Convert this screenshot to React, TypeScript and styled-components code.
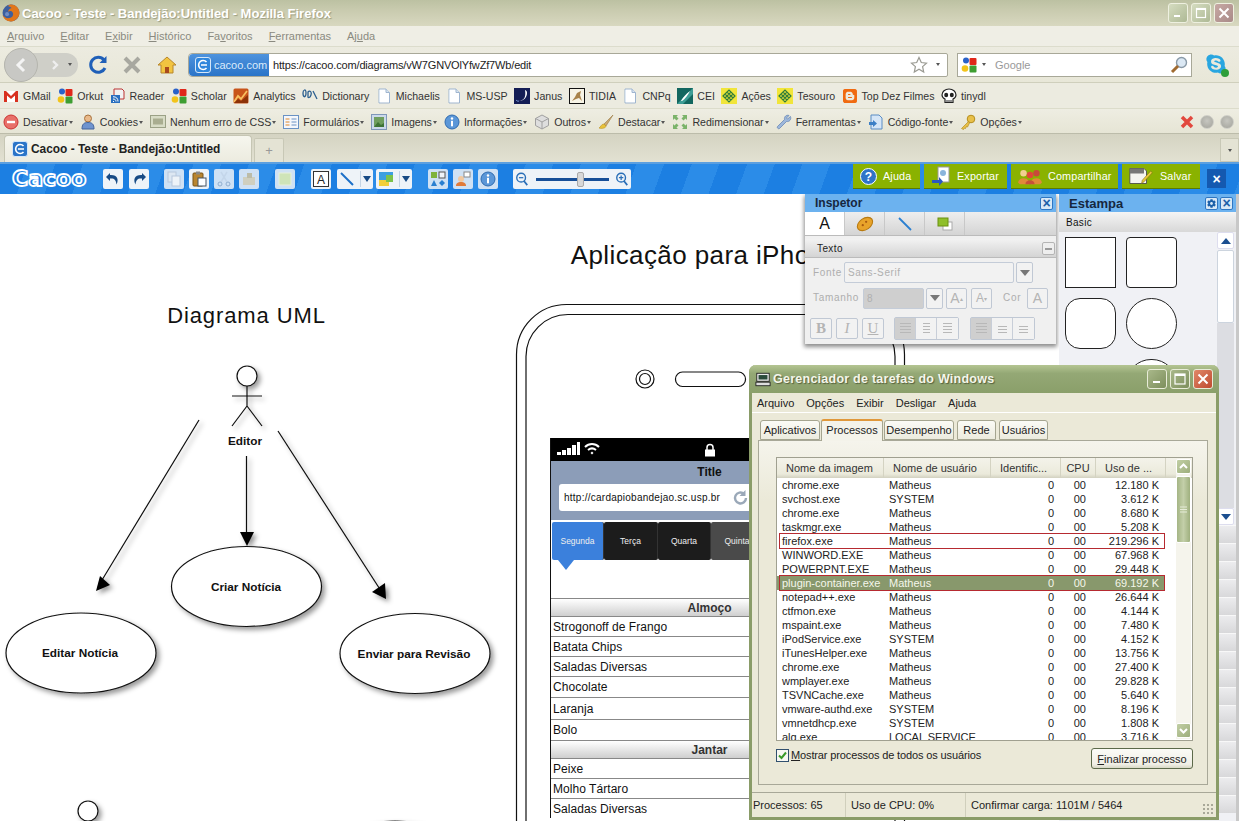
import styled, { createGlobalStyle } from 'styled-components';
import { FaBlogger, FaCog, FaSkype } from 'react-icons/fa';
import { ReactNode } from 'react';

const GlobalStyle = createGlobalStyle`
  html, body { margin: 0; padding: 0; overflow: hidden; background: #fff; }
  * { box-sizing: border-box; }
`;

const Ico = styled.svg.attrs({ viewBox: '0 0 16 16' })<{ $s?: number }>`
  width: ${(p) => p.$s ?? 16}px;
  height: ${(p) => p.$s ?? 16}px;
  flex: none;
  display: block;
`;

/* ---------- bookmark icons ---------- */
const GmailIcon = () => (
  <Ico>
    <path d="M1 3h14v11H1z" fill="#fff" />
    <path d="M1 14V3h2l5 5 5-5h2v11h-3V7.5L8 11 4 7.5V14z" fill="#d8301f" />
  </Ico>
);
const GoogleIcon = () => (
  <Ico>
    <circle cx="5" cy="3.6" r="3" fill="#2a62c8" />
    <rect x="8.5" y="1" width="7" height="7" rx="1" fill="#e0271a" />
    <circle cx="4" cy="11.5" r="3.3" fill="#f3c41a" />
    <rect x="8.5" y="8.5" width="7" height="7" rx="1" fill="#3e9e32" />
  </Ico>
);
const ReaderIcon = () => (
  <Ico>
    <path d="M4 1h8l2 2v8H4z" fill="#f2f2f2" stroke="#b33" />
    <rect x="1" y="7" width="9" height="8" fill="#2a6fc0" />
    <path d="M3 13.5h1M3 11c2 0 3 1 3 2.5M3 8.7c3.500 0 5 2 5 4.800" stroke="#fff" fill="none" />
  </Ico>
);
const AnalyticsIcon = () => (
  <Ico>
    <rect x="0.500" y="0.500" width="15" height="15" rx="1.500" fill="#c8541a" />
    <path d="M1 14l4-6 3 3 6-8" stroke="#f8c060" strokeWidth="1.800" fill="none" />
    <path d="M1 15l4-4 3 2 7-6v8z" fill="#8c3208" />
  </Ico>
);
const DictionaryIcon = () => (
  <Ico>
    <path d="M1 5c0 5 3 5 3 0s-3-3-3 0M6 9V4c2-2 4 0 3 3s-3 3-3 2M11 3l4 8" stroke="#2c5f8f" strokeWidth="1.300" fill="none" />
  </Ico>
);
const PageIcon = () => (
  <Ico>
    <path d="M3 1h7l3.500 3.500V15H3z" fill="#fff" stroke="#9fb5cf" />
    <path d="M10 1v3.500h3.500" fill="#dbe6f2" stroke="#9fb5cf" />
    <path d="M3.500 14V2" stroke="#dde8f4" />
  </Ico>
);
const JanusIcon = () => (
  <Ico>
    <rect width="16" height="16" fill="#141d55" />
    <path d="M11 2c1 6 0 10-6 11 4 0 8-3 8-8 0-2-.5-2-2-3z" fill="#fff" />
    <path d="M2 12c1 1 2 1.500 3 1" stroke="#7fa0e0" fill="none" />
  </Ico>
);
const TidiaIcon = () => (
  <Ico>
    <rect x="0.500" y="0.500" width="15" height="15" fill="#f7f4e6" stroke="#111" />
    <path d="M3 13l3-4 2-4 4-2-1 4 2 6-3-3-3 1z" fill="#a9834a" />
  </Ico>
);
const CeiIcon = () => (
  <Ico>
    <rect width="16" height="16" fill="#12665f" />
    <path d="M0 16L16 0v6L6 16z" fill="#3d9d96" />
    <path d="M4 13c2-4 5-7 9-10-2 4-5 8-8 10z" fill="#fff" />
  </Ico>
);
const BancoIcon = () => (
  <Ico>
    <rect width="16" height="16" fill="#f1e53a" />
    <path d="M2 8l6-6 6 6-6 6zM4 6l6 6M6 4l6 6M6 12l6-6M4 10l6-6" stroke="#2f7d3a" strokeWidth="1.200" fill="none" />
  </Ico>
);
const SkullIcon = () => (
  <Ico>
    <path d="M8 1c4 0 7 2.500 7 6 0 2-1 3-3 4v3.500H4V11C2 10 1 9 1 7c0-3.500 3-6 7-6z" fill="#fff" stroke="#222" strokeWidth="1.200" />
    <ellipse cx="5.200" cy="7" rx="2" ry="2.200" fill="#222" />
    <ellipse cx="10.800" cy="7" rx="2" ry="2.200" fill="#222" />
    <path d="M6 12v2.500M8 12v2.500M10 12v2.500" stroke="#222" />
  </Ico>
);

/* ---------- web developer bar icons ---------- */
const DisableIcon = () => (
  <Ico>
    <circle cx="8" cy="8" r="7" fill="#e8706a" stroke="#c33" />
    <rect x="4" y="6.800" width="8" height="2.400" fill="#fff" />
  </Ico>
);
const CookiesIcon = () => (
  <Ico>
    <circle cx="8" cy="4.500" r="3.500" fill="#e9b98a" stroke="#a8733f" />
    <path d="M2 15c0-5 2-6.500 6-6.500s6 1.500 6 6.500z" fill="#6f94cf" stroke="#44659b" />
  </Ico>
);
const CssIcon = () => (
  <svg width="16" height="13" viewBox="0 0 16 13" style={{ flex: 'none' }}>
    <rect x="0.500" y="0.500" width="15" height="12" fill="#d8dcc6" stroke="#9ba186" />
    <rect x="3" y="3.500" width="10" height="6" fill="#a9ad90" />
  </svg>
);
const FormsIcon = () => (
  <Ico>
    <rect x="0.500" y="1.500" width="15" height="13" fill="#f5f7fb" stroke="#6a92c4" />
    <path d="M2.500 5h4M2.500 8h4M2.500 11h4" stroke="#e0882a" />
    <path d="M8.500 5h5M8.500 8h5M8.500 11h5" stroke="#6a92c4" />
  </Ico>
);
const ImagesIcon = () => (
  <Ico>
    <rect x="0.500" y="0.500" width="15" height="15" fill="#cbd9ea" stroke="#7f97b8" />
    <rect x="3" y="3" width="10" height="10" fill="#6f9e5e" />
    <path d="M3 13l4-5 3 3 3-2v4z" fill="#3f7436" />
  </Ico>
);
const InfoIcon = () => (
  <Ico>
    <circle cx="8" cy="8" r="7" fill="#5b97d8" stroke="#2f6bb0" />
    <circle cx="8" cy="4.500" r="1.200" fill="#fff" />
    <rect x="7" y="6.800" width="2" height="5.500" fill="#fff" />
  </Ico>
);
const CubeIcon = () => (
  <Ico>
    <path d="M8 1l6.500 3.500v7L8 15l-6.500-3.500v-7z" fill="#dedede" stroke="#a0a0a0" />
    <path d="M1.500 4.500L8 8l6.500-3.500M8 8v7" stroke="#a0a0a0" fill="none" />
  </Ico>
);
const BrushIcon = () => (
  <Ico>
    <path d="M15 1L6 10l2 2z" fill="#c9a873" stroke="#9a7a45" strokeWidth="0.600" />
    <path d="M6 10c-3 0-3 3-5 4 3 1 7 0 7-2z" fill="#e8c23a" stroke="#b89020" strokeWidth="0.600" />
  </Ico>
);
const ResizeIcon = () => (
  <Ico>
    <path d="M1 1h5L4.500 2.500 6.500 4.500 4.500 6.500 2.500 4.500 1 6zM15 1v5l-1.500-1.500-2 2-2-2 2-2L10 1zM1 15v-5l1.500 1.500 2-2 2 2-2 2L6 15zM15 15h-5l1.500-1.500-2-2 2-2 2 2L15 10z" fill="#7bb36a" />
  </Ico>
);
const WrenchIcon = () => (
  <Ico>
    <path d="M14.500 2.500L11.500 5 10.500 4 13 1.500C10.500.5 8 2.500 8.500 5.500L1.500 12.500c-1 1 1 3 2 2L10.500 7.500c3 .5 5-2 4-5z" fill="#9db7db" stroke="#5d7fb0" strokeWidth="0.700" />
  </Ico>
);
const SourceIcon = () => (
  <Ico>
    <path d="M3 1h8l3 3v11H3z" fill="#d6e6f7" stroke="#5b8cc4" />
    <path d="M1 8h4V6l4 3.500L5 13v-2H1z" fill="#3c7fc6" />
  </Ico>
);
const KeyIcon = () => (
  <Ico>
    <circle cx="11" cy="5" r="3.800" fill="#e8c04a" stroke="#b58e1f" />
    <path d="M8.500 7.500L1.500 14.500l2 1 1-1.500 1 .5 1-2 1 .5 2-4z" fill="#e8c04a" stroke="#b58e1f" strokeWidth="0.700" />
  </Ico>
);

/* ---------- browser frame ---------- */
const Page = styled.div`
  width: 1239px;
  height: 821px;
  overflow: hidden;
  display: flex;
  flex-direction: column;
  font-family: 'Liberation Sans', Arial, sans-serif;
  font-size: 11px;
  color: #222;
`;

const TitleBar = styled.div`
  height: 26px;
  flex: none;
  display: flex;
  align-items: center;
  padding: 0 5px 0 2px;
  background: linear-gradient(#bcc1a2, #c9cbaf 40%, #d8d8c0);
`;

const TitleText = styled.div`
  margin-left: 2px;
  flex: 1;
  font-size: 13px;
  font-weight: bold;
  color: #fff;
  text-shadow: 1px 1px 1px #9a9c80;
`;

const CaptionBtn = styled.div<{ $close?: boolean }>`
  width: 20px;
  height: 20px;
  margin-left: 3px;
  border: 1px solid #eef0e0;
  border-radius: 3px;
  display: flex;
  align-items: center;
  justify-content: center;
  background: ${(p) => (p.$close ? 'linear-gradient(135deg,#c7a9a4,#a98a88)' : 'linear-gradient(135deg,#d5dcc0,#aeb995)')};
`;

const MenuBar = styled.div`
  height: 21px;
  flex: none;
  display: flex;
  align-items: center;
  gap: 16px;
  padding-left: 7px;
  background: #efeee5;
  border-bottom: 1px solid #dcdccc;
  color: #8a8a80;
  font-size: 11px;
`;

const NavBar = styled.div`
  height: 36px;
  flex: none;
  display: flex;
  align-items: center;
  padding-left: 4px;
  background: linear-gradient(#ecebe0, #e8e7d8);
  border-bottom: 1px solid #cfcfbc;
`;

const BackForward = styled.div`
  position: relative;
  width: 74px;
  height: 24px;
  display: flex;
  align-items: center;
  justify-content: flex-end;
  padding-right: 6px;
  border-radius: 12px;
  background: #cfcfc8;
  color: #888;
`;

const BackCircle = styled.div`
  position: absolute;
  left: 0;
  top: -5px;
  width: 34px;
  height: 34px;
  border-radius: 50%;
  background: #c8c8c4;
  border: 1px solid #b5b5ae;
  display: flex;
  align-items: center;
  justify-content: center;
`;

const UrlField = styled.div`
  margin-left: 11px;
  width: 760px;
  height: 24px;
  display: flex;
  align-items: center;
  background: #fff;
  border: 1px solid #a8a898;
  border-radius: 4px 2px 2px 4px;
  color: #222;
`;

const IdentityBox = styled.div`
  height: 100%;
  width: 80px;
  flex: none;
  display: flex;
  align-items: center;
  gap: 3px;
  padding-left: 6px;
  margin-right: 4px;
  border-radius: 4px 0 0 4px;
  background: linear-gradient(#4e93de, #2a74c8);
  color: #dcebfb;
  font-size: 11px;
`;

const UrlText = styled.span`
  flex: 1;
  font-size: 11px;
  letter-spacing: -0.160px;
`;

const SearchField = styled.div`
  margin-left: 9px;
  width: 235px;
  height: 24px;
  display: flex;
  align-items: center;
  padding: 0 2px 0 3px;
  background: #fff;
  border: 1px solid #a8a898;
  color: #999;
  font-size: 11px;
`;

const SkypeWrap = styled.div`
  position: relative;
  margin-left: 13px;
  width: 24px;
  height: 24px;
`;

const SkypeBadge = styled.span`
  position: absolute;
  right: 0;
  bottom: 0;
  width: 8px;
  height: 8px;
  border-radius: 50%;
  background: #2e9e3a;
`;

const LinkBar = styled.div`
  height: 26px;
  flex: none;
  display: flex;
  align-items: center;
  gap: 6.500px;
  padding: 1px 0 0 3px;
  background: #ecebe0;
  border-bottom: 1px solid #dcdccb;
`;

const LinkItem = styled.div`
  display: flex;
  align-items: center;
  gap: 4px;
  color: #333;
  font-size: 10.600px;
  white-space: nowrap;
`;

const DevBar = styled(LinkBar)`
  height: 25px;
  gap: 7px;
  background: linear-gradient(#eeede2, #e6e5d5);
  border-bottom: 1px solid #bcbcaa;
`;

const Caret = styled.span`
  display: inline-block;
  margin-left: 1px;
  vertical-align: middle;
  border-left: 2px solid transparent;
  border-right: 2px solid transparent;
  border-top: 3px solid #555;
`;

const DevRight = styled.div`
  margin-left: auto;
  display: flex;
  align-items: center;
  gap: 6px;
  padding-right: 5px;
`;

const GreyDot = styled.div`
  width: 14px;
  height: 14px;
  border-radius: 50%;
  background: radial-gradient(circle at 50% 40%, #c6c6c0, #a2a29a);
  border: 1px solid #cfcfc8;
`;

const TabBar = styled.div`
  height: 28px;
  flex: none;
  display: flex;
  align-items: flex-end;
  padding-left: 4px;
  background: linear-gradient(#d4d3c2, #e2e1d2);
`;

const ActiveTab = styled.div`
  width: 248px;
  height: 27px;
  display: flex;
  align-items: center;
  gap: 3px;
  padding-left: 7px;
  border-radius: 4px 4px 0 0;
  border: 1px solid #c6c6b4;
  border-bottom: none;
  background: linear-gradient(#f6f6ee, #ecebdf);
  color: #222;
  font-size: 11.900px;
  font-weight: bold;
`;

const NewTab = styled.div`
  margin-left: 2px;
  width: 30px;
  height: 24px;
  display: flex;
  align-items: center;
  justify-content: center;
  border: 1px solid #c8c8b6;
  border-bottom: none;
  border-radius: 2px 2px 0 0;
  color: #999;
  font-size: 13px;
  background: #e4e3d4;
`;

const TabMenu = styled.div`
  margin-left: auto;
  width: 19px;
  height: 24px;
  display: flex;
  align-items: center;
  justify-content: center;
  border: 1px solid #c8c8b6;
  background: #e4e3d4;
`;

/* ---------- cacoo toolbar ---------- */
const AppBar = styled.div`
  height: 32px;
  flex: none;
  display: flex;
  align-items: center;
  padding: 0 13px 0 12px;
  border-top: 2px solid #5b9fe0;
  background: repeating-linear-gradient(110deg, #1c7fe2 0 26px, #2b8ce8 26px 52px);
`;

const Logo = styled.div`
  width: 75px;
  color: #1c7fe2;
  font-family: 'DejaVu Sans', sans-serif;
  font-size: 22px;
  font-weight: bold;
  line-height: 22px;
  -webkit-text-stroke: 1.800px #fff;
`;

const ToolGroup = styled.div<{ $gap?: number; $ml?: number }>`
  display: flex;
  align-items: center;
  gap: ${(p) => p.$gap ?? 6}px;
  margin-left: ${(p) => p.$ml ?? 16}px;
`;

const ToolBtn = styled.div<{ $dim?: boolean; $w?: number }>`
  position: relative;
  width: ${(p) => p.$w ?? 20}px;
  height: 20px;
  flex: none;
  display: flex;
  align-items: center;
  justify-content: flex-start;
  padding-left: 2px;
  border-radius: 2px;
  background: ${(p) => (p.$dim ? '#cfe1f4' : '#eef3f8')};
`;

const SplitArrow = styled.span`
  position: absolute;
  right: 1px;
  top: 2px;
  width: 12px;
  height: 16px;
  border-left: 1px solid #c4d4e4;
  display: flex;
  align-items: center;
  justify-content: center;
  &::after {
    content: '';
    border-left: 4px solid transparent;
    border-right: 4px solid transparent;
    border-top: 6px solid #174a85;
  }
`;

const ZoomBox = styled.div`
  margin-left: 15px;
  width: 118px;
  height: 20px;
  display: flex;
  align-items: center;
  justify-content: space-between;
  padding: 0 2px;
  border-radius: 2px;
  background: #eef3f8;
`;

const SliderTrack = styled.div`
  position: relative;
  width: 73px;
  height: 3px;
  background: #174f98;
`;

const SliderThumb = styled.div`
  position: absolute;
  left: 41px;
  top: -6px;
  width: 7px;
  height: 15px;
  border-radius: 2px;
  background: #d8d8d8;
  border: 1px solid #aaa;
`;

const ActionRow = styled.div`
  margin-left: auto;
  align-self: flex-start;
  display: flex;
  gap: 4px;
`;

const ActionBtn = styled.div<{ $w: number }>`
  width: ${(p) => p.$w}px;
  height: 25px;
  display: flex;
  align-items: center;
  gap: 6px;
  padding-left: 7px;
  background: #8ab200;
  border-bottom: 1px solid #5c7a00;
  color: #fff;
  font-size: 10.800px;
  letter-spacing: 0.150px;
  white-space: nowrap;
`;

const CloseApp = styled.div`
  margin-left: 7px;
  margin-top: 5px;
  align-self: flex-start;
  width: 19px;
  height: 19px;
  background: #1459b0;
  color: #fff;
  font-size: 14px;
  font-weight: bold;
  display: flex;
  align-items: center;
  justify-content: center;
`;

/* ---------- canvas ---------- */
const Canvas = styled.div`
  position: relative;
  flex: 1;
  overflow: hidden;
  background: #fff;
`;

const DiagramSvg = styled.svg`
  position: absolute;
  left: 0;
  top: 0;
  display: block;
`;

const DiagramLabel = styled.div<{ $x: number; $y: number; $size?: number; $bold?: boolean; $ls?: number }>`
  position: absolute;
  left: ${(p) => p.$x}px;
  top: ${(p) => p.$y}px;
  transform: translate(-50%, -50%);
  white-space: nowrap;
  color: #111;
  font-size: ${(p) => p.$size ?? 11.800}px;
  font-weight: ${(p) => (p.$bold ? 'bold' : 'normal')};
  letter-spacing: ${(p) => p.$ls ?? 0}px;
`;

/* phone mockup */
const PhoneScreen = styled.div`
  position: absolute;
  left: 550px;
  top: 244px;
  width: 318px;
  border-left: 1px solid #111;
  background: #fff;
`;

const StatusStrip = styled.div`
  position: relative;
  height: 23px;
  background: #000;
  display: flex;
  align-items: center;
  justify-content: center;
`;

const SignalWrap = styled.div`
  position: absolute;
  left: 6px;
  top: 3px;
`;

const SafariBar = styled.div`
  height: 59px;
  padding: 4px 8px 0;
  background: #8c9db8;
`;

const SafariTitle = styled.div`
  text-align: center;
  font-size: 12px;
  font-weight: bold;
  color: #111;
  height: 19px;
`;

const SafariUrl = styled.div`
  height: 27px;
  display: flex;
  align-items: center;
  padding: 0 5px;
  border-radius: 3px;
  background: #fff;
  font-size: 10px;
  letter-spacing: 0.250px;
  color: #111;
`;

const SafariUrlText = styled.span`
  width: 169px;
  flex: none;
`;

const SegTabs = styled.div`
  margin-top: 2px;
  margin-left: 1px;
  height: 38px;
  display: flex;
`;

const SegTab = styled.div<{ $bg: string; $w: number }>`
  position: relative;
  width: ${(p) => p.$w}px;
  flex: none;
  display: flex;
  align-items: center;
  justify-content: center;
  border-right: 1px solid #333;
  border-radius: 2px;
  background: ${(p) => p.$bg};
  color: #eee;
  font-size: 8.500px;
`;

const SegPointer = styled.span`
  position: absolute;
  left: 6px;
  top: 100%;
  border-left: 8px solid transparent;
  border-right: 8px solid transparent;
  border-top: 10px solid #3b80dc;
`;

const MenuTable = styled.div`
  margin-top: 38px;
`;

const MenuHeader = styled.div<{ $h: number }>`
  height: ${(p) => p.$h}px;
  display: flex;
  align-items: center;
  justify-content: center;
  border-top: 1px solid #888;
  background: linear-gradient(#fff, #cfcfcf);
  font-size: 12px;
  font-weight: bold;
  color: #333;
`;

const MenuRow = styled.div<{ $h: number }>`
  height: ${(p) => p.$h}px;
  display: flex;
  align-items: center;
  padding-left: 2px;
  border-top: 1px solid #888;
  font-size: 12px;
  letter-spacing: 0.050px;
  color: #111;
`;

/* inspector */
const Inspector = styled.div`
  position: absolute;
  left: 805px;
  top: 0;
  width: 251px;
  height: 150px;
  background: #f0f0f0;
  box-shadow: 0 2px 4px 1px rgba(0, 0, 0, 0.45);
  border-radius: 3px 3px 0 0;
`;

const PanelHead = styled.div`
  height: 18px;
  display: flex;
  align-items: center;
  justify-content: space-between;
  padding: 0 3px 0 10px;
  background: #6cb2ef;
  color: #16273f;
  font-size: 12px;
  font-weight: bold;
`;

const HeadBtn = styled.div`
  width: 13px;
  height: 13px;
  margin-left: 2px;
  display: flex;
  align-items: center;
  justify-content: center;
  background: #d8e8f6;
  border: 1px solid #2e76c2;
  border-radius: 2px;
  color: #1b5fa8;
  font-size: 14px;
  font-weight: bold;
  line-height: 1;
`;

const InspTabs = styled.div`
  height: 24px;
  display: flex;
  background: linear-gradient(#eee, #d4d4d4);
  border-bottom: 1px solid #bbb;
`;

const InspTab = styled.div<{ $on?: boolean }>`
  width: 40px;
  display: flex;
  align-items: center;
  justify-content: center;
  background: ${(p) => (p.$on ? '#fff' : 'transparent')};
  border-right: 1px solid #c8c8c8;
  font-size: 16px;
  color: #111;
`;

const SectionHead = styled.div`
  margin-top: 3px;
  height: 19px;
  display: flex;
  align-items: center;
  justify-content: space-between;
  padding: 1px 1px 0 12px;
  background: linear-gradient(#f2f2f2, #d4d4d4);
  border-bottom: 1px solid #bbb;
  font-size: 10px;
  letter-spacing: 0.400px;
`;

const CollapseBtn = styled.div`
  width: 13px;
  height: 13px;
  display: flex;
  align-items: center;
  justify-content: center;
  border: 1px solid #b4b4b4;
  border-radius: 2px;
  background: #eee;
  &::after {
    content: '';
    width: 7px;
    height: 2px;
    background: #9a9a9a;
  }
`;

const FormBody = styled.div`
  padding: 4px 0 0 8px;
  display: flex;
  flex-direction: column;
`;

const FormRow = styled.div<{ $h: number; $mt?: number; $ml?: number }>`
  height: ${(p) => p.$h}px;
  margin-top: ${(p) => p.$mt ?? 0}px;
  margin-left: ${(p) => p.$ml ?? 0}px;
  display: flex;
  align-items: center;
`;

const FieldLabel = styled.span<{ $w: number; $ml?: number }>`
  width: ${(p) => p.$w}px;
  margin-left: ${(p) => p.$ml ?? 0}px;
  flex: none;
  color: #aeaeae;
  font-size: 10px;
  line-height: 12px;
  letter-spacing: 0.700px;
`;

const FieldInput = styled.div<{ $w: number; $grey?: boolean }>`
  width: ${(p) => p.$w}px;
  height: 21px;
  flex: none;
  display: flex;
  align-items: center;
  padding-left: 3px;
  border: 1px solid #c4ccd8;
  border-radius: 2px;
  background: ${(p) => (p.$grey ? '#cfcfcf' : '#f2f2f2')};
  color: #b0b0b0;
  font-size: 10px;
  letter-spacing: 0.600px;
`;

const FieldBtn = styled.div<{ $w?: number; $ml?: number }>`
  width: ${(p) => p.$w ?? 17}px;
  height: 21px;
  flex: none;
  margin-left: ${(p) => p.$ml ?? 2}px;
  display: flex;
  align-items: center;
  justify-content: center;
  border: 1px solid #c0c8d4;
  border-radius: 2px;
  background: #f2f2f2;
  color: #b4b4b4;
  font-size: 15px;
  font-family: 'Liberation Serif', serif;
`;

const SansGlyph = styled.span<{ $size?: number }>`
  font-family: 'Liberation Sans', sans-serif;
  font-size: ${(p) => p.$size ?? 14}px;
`;

const DownTri = styled.span`
  border-left: 5px solid transparent;
  border-right: 5px solid transparent;
  border-top: 6px solid #777;
`;

const AlignGroup = styled.div<{ $ml: number }>`
  display: flex;
  margin-left: ${(p) => p.$ml}px;
  border: 1px solid #c0c8d4;
  border-radius: 2px;
`;

const AlignCell = styled.div<{ $on?: boolean }>`
  width: 21px;
  height: 21px;
  display: flex;
  align-items: center;
  justify-content: center;
  background: ${(p) => (p.$on ? '#cfcfcf' : '#f2f2f2')};
  border-right: 1px solid #c8ced8;
  &:last-child { border-right: none; }
`;

/* stencil panel */
const Stencil = styled.div`
  position: absolute;
  left: 1059px;
  top: 0;
  width: 180px;
  height: 100%;
  display: flex;
  flex-direction: column;
  background: #f0f1f5;
  border-right: 3px solid #c8c8c8;
`;

const StencilHead = styled(PanelHead)`
  padding-left: 10px;
  font-size: 13px;
`;

const HeadBtns = styled.span`
  display: flex;
`;

const StencilTab = styled.div`
  height: 20px;
  display: flex;
  align-items: center;
  padding-left: 7px;
  font-size: 10px;
  letter-spacing: 0.300px;
  color: #111;
  background: linear-gradient(#f4f4f4, #d8d8d8);
`;

const StencilBody = styled.div`
  height: 293px;
  flex: none;
  display: flex;
  overflow: hidden;
`;

const ShapeGrid = styled.div`
  width: 157px;
  padding: 5px 0 0 6px;
  display: grid;
  grid-template-columns: 51px 51px;
  grid-auto-rows: 51px;
  gap: 10px;
`;

const ShapeBox = styled.div<{ $r: string }>`
  border: 1.500px solid #222;
  border-radius: ${(p) => p.$r};
  background: #fff;
`;

const StencilScroll = styled.div`
  width: 17px;
  margin-left: 1px;
  display: flex;
  flex-direction: column;
`;

const ScrollCap = styled.div<{ $up?: boolean }>`
  height: 17px;
  flex: none;
  display: flex;
  align-items: center;
  justify-content: center;
  background: #fff;
  border-radius: 2px;
  border: 1px solid #dde;
  &::after {
    content: '';
    border-left: 5px solid transparent;
    border-right: 5px solid transparent;
    ${(p) => (p.$up ? 'border-bottom: 6px solid #1b4f90;' : 'border-top: 6px solid #1b4f90;')}
  }
`;

const ScrollThumb = styled.div`
  height: 73px;
  margin-top: 1px;
  background: #fff;
  border: 1px solid #ccd4de;
  border-radius: 2px;
`;

const ScrollRest = styled.div`
  flex: 1;
  background: #dcdde2;
`;

const StencilRow = styled.div`
  height: 18px;
  flex: none;
  background: linear-gradient(#ececee, #d8d8da);
  border-top: 1px solid #f8f8f8;
`;

/* task manager */
const TaskWindow = styled.div`
  position: absolute;
  left: 749px;
  top: 171px;
  width: 470px;
  height: 455px;
  display: flex;
  flex-direction: column;
  border: 3px solid #8a9c68;
  border-top: none;
  border-radius: 7px 7px 0 0;
  background: #ebe9d8;
  font-family: 'Liberation Sans', Arial, sans-serif;
  font-size: 11px;
  color: #222;
`;

const TaskTitle = styled.div`
  height: 28px;
  margin: 0 -3px;
  flex: none;
  display: flex;
  align-items: center;
  padding: 0 6px 0 6px;
  border-radius: 7px 7px 0 0;
  background: linear-gradient(#b4c592, #94a875 30%, #8a9f6a);
  color: #f4f6ea;
  font-size: 12.500px;
  font-weight: bold;
  letter-spacing: 0.250px;
  text-shadow: 1px 1px 1px #55603c;
`;

const TaskTitleText = styled.span`
  flex: 1;
  margin-left: 2px;
`;

const TaskCaption = styled.div<{ $close?: boolean }>`
  width: 20px;
  height: 20px;
  margin-left: 3px;
  display: flex;
  align-items: center;
  justify-content: center;
  border: 1px solid #e8ecd8;
  border-radius: 3px;
  background: ${(p) => (p.$close ? 'linear-gradient(135deg,#e08868,#bf4a30)' : 'linear-gradient(135deg,#a9b88a,#7d8f5c)')};
`;

const TaskMenu = styled.div`
  height: 20px;
  flex: none;
  display: flex;
  align-items: center;
  gap: 12px;
  padding-left: 5px;
  border-bottom: 1px solid #fff;
`;

const TaskTabs = styled.div`
  height: 27px;
  flex: none;
  display: flex;
  align-items: flex-end;
  gap: 1px;
  padding-left: 8px;
`;

const TaskTab = styled.div<{ $on?: boolean; $w: number; $ml?: number }>`
  width: ${(p) => p.$w}px;
  height: ${(p) => (p.$on ? 22 : 20)}px;
  position: relative;
  z-index: ${(p) => (p.$on ? 1 : 0)};
  margin-left: ${(p) => p.$ml ?? 0}px;
  margin-bottom: ${(p) => (p.$on ? -1 : 0)}px;
  padding-bottom: ${(p) => (p.$on ? 3 : 0)}px;
  display: flex;
  align-items: center;
  justify-content: center;
  border: 1px solid #a5a590;
  border-bottom: ${(p) => (p.$on ? 'none' : '1px solid #a5a590')};
  border-top: ${(p) => (p.$on ? '2px solid #e0983a' : '1px solid #a5a590')};
  border-radius: 3px 3px 0 0;
  background: ${(p) => (p.$on ? '#f4f3ea' : 'linear-gradient(#fbfbf6,#ecebde)')};
`;

const TaskPanel = styled.div`
  width: 450px;
  height: 345px;
  flex: none;
  margin-left: 6px;
  padding: 16px 0 0 17px;
  border: 1px solid #a8a898;
  background: linear-gradient(#f5f4ec, #ebe9d8 60px);
`;

const ProcList = styled.div`
  position: relative;
  width: 417px;
  height: 284px;
  border: 1px solid #a0a090;
  background: #fff;
  overflow: hidden;
`;

const ProcHead = styled.div`
  display: grid;
  grid-template-columns: 107px 107px 70px 35px 70px 26px;
  height: 20px;
  background: linear-gradient(#f4f3ea, #ebeadb 80%, #d2d1c0);
  color: #333;
`;

const ProcHeadCell = styled.div<{ $center?: boolean }>`
  display: flex;
  align-items: center;
  justify-content: ${(p) => (p.$center ? 'center' : 'flex-start')};
  padding-left: ${(p) => (p.$center ? 0 : 9)}px;
  border-right: 1px solid #d4d3c2;
  white-space: nowrap;
  overflow: hidden;
  &:last-child { border-right: none; }
`;

const ProcRow = styled.div<{ $sel?: boolean; $mark?: boolean }>`
  position: relative;
  display: grid;
  grid-template-columns: 106px 107px 71px 35px 69px;
  width: 388px;
  height: 14px;
  line-height: 14px;
  white-space: nowrap;
  background: ${(p) => (p.$sel ? '#88986c' : 'transparent')};
  color: ${(p) => (p.$sel ? '#f4f6ea' : '#222')};
  &::after {
    content: '';
    display: ${(p) => (p.$mark ? 'block' : 'none')};
    position: absolute;
    left: 2px;
    right: 0;
    top: -1px;
    bottom: -1px;
    border: 1px solid #b62a30;
  }
`;

const ProcCell = styled.div<{ $right?: number }>`
  text-align: ${(p) => (p.$right !== undefined ? 'right' : 'left')};
  padding-left: ${(p) => (p.$right !== undefined ? 0 : 6)}px;
  padding-right: ${(p) => p.$right ?? 0}px;
  &:first-child { padding-left: 5px; }
`;

const ProcScroll = styled.div`
  position: absolute;
  right: 1px;
  top: 1px;
  bottom: 1px;
  width: 15px;
  display: flex;
  flex-direction: column;
  background: #f5f4ec;
`;

const XpScrollBtn = styled.div<{ $up?: boolean }>`
  height: 15px;
  margin-top: ${(p) => (p.$up ? 0 : 'auto')};
  margin-bottom: 1px;
  flex: none;
  display: flex;
  align-items: center;
  justify-content: center;
  border: 1px solid #fff;
  border-radius: 2px;
  background: linear-gradient(135deg, #c2cfa5, #9dae7c);
`;

const XpThumb = styled.div`
  height: 67px;
  margin-top: 1px;
  display: flex;
  align-items: center;
  justify-content: center;
  border: 1px solid #fff;
  border-radius: 2px;
  background: linear-gradient(90deg, #a5b585, #c3cfa9 50%, #9fb07e);
`;

const ProcFooter = styled.div`
  width: 417px;
  margin-top: 7px;
  display: flex;
  justify-content: space-between;
  align-items: flex-start;
`;

const CheckLabel = styled.label`
  display: flex;
  align-items: center;
  gap: 2px;
  height: 14px;
  letter-spacing: -0.130px;
`;

const CheckBox = styled.span`
  width: 13px;
  height: 13px;
  display: flex;
  align-items: center;
  justify-content: center;
  border: 1px solid #31506e;
  background: #f8f8f2;
`;

const EndButton = styled.div`
  width: 102px;
  height: 21px;
  display: flex;
  align-items: center;
  justify-content: center;
  border: 1px solid #5c6a4a;
  border-radius: 3px;
  background: linear-gradient(#fbfbf6, #f0efe6 80%, #d8d8c6);
`;

const TaskStatus = styled.div`
  margin-top: 7px;
  flex: 1;
  display: flex;
  align-items: center;
  border-top: 1px solid #a8a898;
`;

const StatusCell = styled.div<{ $w: number; $pl: number }>`
  width: ${(p) => p.$w}px;
  height: 100%;
  flex: none;
  display: flex;
  align-items: center;
  padding-left: ${(p) => p.$pl}px;
  border-right: 1px solid #d0cfbc;
`;

const StatusText = styled.span`
  padding-left: 5px;
`;

const Grip = styled.div`
  margin-left: auto;
  margin-right: 2px;
  margin-top: 8px;
  width: 12px;
  height: 12px;
  background-image: radial-gradient(#a8a898 35%, transparent 40%);
  background-size: 4px 4px;
`;

/* ---------- data ---------- */
const links: [ReactNode, string][] = [
  [<GmailIcon />, 'GMail'],
  [<GoogleIcon />, 'Orkut'],
  [<ReaderIcon />, 'Reader'],
  [<GoogleIcon />, 'Scholar'],
  [<AnalyticsIcon />, 'Analytics'],
  [<DictionaryIcon />, 'Dictionary'],
  [<PageIcon />, 'Michaelis'],
  [<PageIcon />, 'MS-USP'],
  [<JanusIcon />, 'Janus'],
  [<TidiaIcon />, 'TIDIA'],
  [<PageIcon />, 'CNPq'],
  [<CeiIcon />, 'CEI'],
  [<BancoIcon />, 'Ações'],
  [<BancoIcon />, 'Tesouro'],
  [<FaBlogger size={16} color="#f06a10" style={{ flex: 'none' }} />, 'Top Dez Filmes'],
  [<SkullIcon />, 'tinydl'],
];

const devTools: [ReactNode, string][] = [
  [<DisableIcon />, 'Desativar'],
  [<CookiesIcon />, 'Cookies'],
  [<CssIcon />, 'Nenhum erro de CSS'],
  [<FormsIcon />, 'Formulários'],
  [<ImagesIcon />, 'Imagens'],
  [<InfoIcon />, 'Informações'],
  [<CubeIcon />, 'Outros'],
  [<BrushIcon />, 'Destacar'],
  [<ResizeIcon />, 'Redimensionar'],
  [<WrenchIcon />, 'Ferramentas'],
  [<SourceIcon />, 'Código-fonte'],
  [<KeyIcon />, 'Opções'],
];

const processes: [string, string, string][] = [
  ['chrome.exe', 'Matheus', '12.180 K'],
  ['svchost.exe', 'SYSTEM', '3.612 K'],
  ['chrome.exe', 'Matheus', '8.680 K'],
  ['taskmgr.exe', 'Matheus', '5.208 K'],
  ['firefox.exe', 'Matheus', '219.296 K'],
  ['WINWORD.EXE', 'Matheus', '67.968 K'],
  ['POWERPNT.EXE', 'Matheus', '29.448 K'],
  ['plugin-container.exe', 'Matheus', '69.192 K'],
  ['notepad++.exe', 'Matheus', '26.644 K'],
  ['ctfmon.exe', 'Matheus', '4.144 K'],
  ['mspaint.exe', 'Matheus', '7.480 K'],
  ['iPodService.exe', 'SYSTEM', '4.152 K'],
  ['iTunesHelper.exe', 'Matheus', '13.756 K'],
  ['chrome.exe', 'Matheus', '27.400 K'],
  ['wmplayer.exe', 'Matheus', '29.828 K'],
  ['TSVNCache.exe', 'Matheus', '5.640 K'],
  ['vmware-authd.exe', 'SYSTEM', '8.196 K'],
  ['vmnetdhcp.exe', 'SYSTEM', '1.808 K'],
  ['alg.exe', 'LOCAL SERVICE', '3.716 K'],
];

const lunch: [string, number][] = [
  ['Strogonoff de Frango', 20],
  ['Batata Chips', 20],
  ['Saladas Diversas', 20],
  ['Chocolate', 21],
  ['Laranja', 22],
  ['Bolo', 21],
];

const dinner: [string, number][] = [
  ['Peixe', 20],
  ['Molho Tártaro', 20],
  ['Saladas Diversas', 20],
];

/* ---------- small pieces ---------- */
const CacooMark = ({ light }: { light?: boolean }) => (
  <Ico $s={16}>
    <rect x="0.500" y="0.500" width="15" height="15" rx="2.500" fill={light ? '#2a74c8' : '#2f86dc'} stroke="#d5e6f8" />
    <path d="M11.500 5A4.500 4.500 0 1 0 11.500 11M6 8h6" stroke="#fff" strokeWidth="1.600" fill="none" />
  </Ico>
);

const FirefoxIcon = () => (
  <Ico $s={18}>
    <circle cx="8" cy="8" r="7.500" fill="#3d5f9e" />
    <path d="M8 .5c5 0 7.500 4 7.500 7.500S12 15.500 8 15.500c-4 0-7-3-7.500-6 1 1.500 3 3.500 6 3 3-.5 4-3 3-5-1-1.500-3-1.500-4-.5 0-2 1.500-3 3-3.500C7.500 2.500 6.500 2 5 2c1-1 2-1.500 3-1.500z" fill="#e0761a" />
    <circle cx="4.500" cy="9" r="1.800" fill="#6f8cc4" />
  </Ico>
);

const UndoIcon = ({ flip }: { flip?: boolean }) => (
  <Ico $s={16} style={flip ? { transform: 'scaleX(-1)' } : undefined}>
    <path d="M5 2L1 6l4 4V7.500c4-.5 6 1 6.500 6 2.500-5 1-10-6.500-9.500z" fill="#174a85" />
  </Ico>
);

const SheetIcon = ({ clip }: { clip?: boolean }) => (
  <Ico $s={16}>
    {clip ? (
      <>
        <rect x="2" y="2" width="10" height="13" rx="1" fill="#b9852f" stroke="#7a5516" />
        <rect x="5" y="0.500" width="4" height="3" fill="#888" />
        <rect x="7" y="7" width="8" height="8" fill="#fff" stroke="#456" />
      </>
    ) : (
      <>
        <rect x="2" y="1" width="8" height="10" fill="#dde7f2" stroke="#b8c8dc" />
        <rect x="6" y="5" width="8" height="10" fill="#eef3f8" stroke="#b8c8dc" />
      </>
    )}
  </Ico>
);

const ProcessRows = () => (
  <>
    {processes.map(([name, user, mem], i) => (
      <ProcRow key={i} $sel={name.startsWith('plugin')} $mark={name.startsWith('plugin') || name === 'firefox.exe'}>
        <ProcCell>{name}</ProcCell>
        <ProcCell>{user}</ProcCell>
        <ProcCell $right={7}>0</ProcCell>
        <ProcCell $right={10}>00</ProcCell>
        <ProcCell $right={6}>{mem}</ProcCell>
      </ProcRow>
    ))}
  </>
);

const AlignLines = ({ w, top }: { w: number; top: number }) => (
  <svg width="13" height="13" viewBox="0 0 13 13">
    {[0, 3, 6, 9].map((d) => (
      <rect key={d} x={(13 - w) / 2} y={top + d} width={w} height="1" fill="#b8b8b8" />
    ))}
  </svg>
);

export default function App() {
  return (
    <Page>
      <GlobalStyle />
      <TitleBar>
        <FirefoxIcon />
        <TitleText>Cacoo - Teste - Bandejão:Untitled - Mozilla Firefox</TitleText>
        <CaptionBtn>
          <svg width="10" height="10"><rect x="1" y="7" width="6" height="2" fill="#fff" /></svg>
        </CaptionBtn>
        <CaptionBtn>
          <svg width="12" height="12"><rect x="1.500" y="1.500" width="9" height="9" fill="none" stroke="#fff" strokeWidth="1.200" /><rect x="1" y="1" width="10" height="2" fill="#fff" /></svg>
        </CaptionBtn>
        <CaptionBtn $close>
          <svg width="12" height="12"><path d="M1.500 1.500l9 9M10.500 1.500l-9 9" stroke="#fff" strokeWidth="2" /></svg>
        </CaptionBtn>
      </TitleBar>

      <MenuBar>
        <span><u>A</u>rquivo</span>
        <span><u>E</u>ditar</span>
        <span>E<u>x</u>ibir</span>
        <span><u>H</u>istórico</span>
        <span>Fa<u>v</u>oritos</span>
        <span><u>F</u>erramentas</span>
        <span>Aj<u>u</u>da</span>
      </MenuBar>

      <NavBar>
        <BackForward>
          <BackCircle>
            <svg width="14" height="16"><path d="M10 2L4 8l6 6" stroke="#f4f4f4" strokeWidth="3" fill="none" /></svg>
          </BackCircle>
          <svg width="10" height="12"><path d="M3 2l4 4-4 4" stroke="#eee" strokeWidth="2.400" fill="none" /></svg>
          <Caret style={{ marginLeft: 8 }} />
        </BackForward>
        <svg width="20" height="20" viewBox="0 0 20 20" style={{ marginLeft: 10 }}>
          <path d="M16 5a7.500 7.500 0 1 0 1 8" stroke="#1f5fb8" strokeWidth="3" fill="none" />
          <path d="M18.500 1v7h-7z" fill="#1f5fb8" />
        </svg>
        <svg width="18" height="18" viewBox="0 0 18 18" style={{ marginLeft: 15 }}>
          <path d="M2 2l14 14M16 2L2 16" stroke="#a8a8a0" strokeWidth="4" />
        </svg>
        <svg width="20" height="20" viewBox="0 0 20 20" style={{ marginLeft: 16 }}>
          <path d="M10 2L1 10h3v8h12v-8h3z" fill="#f2c440" stroke="#b8862a" />
          <rect x="8" y="12" width="4" height="6" fill="#a8491c" />
        </svg>
        <UrlField>
          <IdentityBox>
            <CacooMark />
            cacoo.com
          </IdentityBox>
          <UrlText>https://cacoo.com/diagrams/vW7GNVOlYfwZf7Wb/edit</UrlText>
          <svg width="18" height="18" viewBox="0 0 18 18">
            <path d="M9 1.500l2.300 5 5.200.6-3.900 3.500 1.100 5.400L9 13.200 4.300 16l1.100-5.400L1.500 7.100l5.200-.6z" fill="#fff" stroke="#9a9a92" strokeWidth="1.200" />
          </svg>
          <Caret style={{ margin: '0 7px 0 8px' }} />
        </UrlField>
        <SearchField>
          <GoogleIcon />
          <Caret style={{ margin: '0 9px 0 5px' }} />
          <span style={{ flex: 1 }}>Google</span>
          <svg width="20" height="20" viewBox="0 0 20 20">
            <circle cx="12.500" cy="7.500" r="5" fill="#dbe8f4" stroke="#8a9aa8" strokeWidth="1.400" />
            <path d="M9 11l-6 6" stroke="#a06a30" strokeWidth="3" />
          </svg>
        </SearchField>
        <SkypeWrap>
          <FaSkype size={22} color="#29a6e0" />
          <SkypeBadge />
        </SkypeWrap>
      </NavBar>

      <LinkBar>
        {links.map(([icon, label]) => (
          <LinkItem key={label}>
            {icon}
            {label}
          </LinkItem>
        ))}
      </LinkBar>

      <DevBar>
        {devTools.map(([icon, label]) => (
          <LinkItem key={label}>
            {icon}
            <span>{label}<Caret /></span>
          </LinkItem>
        ))}
        <DevRight>
          <svg width="14" height="14" viewBox="0 0 14 14"><path d="M2 2l10 10M12 2L2 12" stroke="#e2483e" strokeWidth="3.500" /></svg>
          <GreyDot />
          <GreyDot />
        </DevRight>
      </DevBar>

      <TabBar>
        <ActiveTab>
          <CacooMark light />
          Cacoo - Teste - Bandejão:Untitled
        </ActiveTab>
        <NewTab>+</NewTab>
        <TabMenu><Caret /></TabMenu>
      </TabBar>

      <AppBar>
        <Logo>Cacoo</Logo>
        <ToolGroup>
          <ToolBtn><UndoIcon /></ToolBtn>
          <ToolBtn><UndoIcon flip /></ToolBtn>
        </ToolGroup>
        <ToolGroup $gap={5} $ml={15}>
          <ToolBtn $dim><SheetIcon /></ToolBtn>
          <ToolBtn><SheetIcon clip /></ToolBtn>
          <ToolBtn $dim>
            <Ico><path d="M5 1l6 10M11 1L5 11" stroke="#c4d6ea" strokeWidth="1.500" /><circle cx="4" cy="13" r="2" fill="none" stroke="#8faecf" /><circle cx="12" cy="13" r="2" fill="none" stroke="#8faecf" /></Ico>
          </ToolBtn>
          <ToolBtn $dim>
            <Ico><rect x="2" y="6" width="12" height="8" fill="#cfcfbf" /><rect x="6" y="2" width="5" height="5" fill="#bcbca8" /></Ico>
          </ToolBtn>
        </ToolGroup>
        <ToolGroup>
          <ToolBtn $dim><Ico><rect x="2" y="2" width="12" height="12" fill="#cfe4b8" stroke="#e8f0dc" /></Ico></ToolBtn>
        </ToolGroup>
        <ToolGroup>
          <ToolBtn>
            <Ico><rect x="0.500" y="0.500" width="15" height="15" fill="#fff" stroke="#333" /><text x="8" y="12.500" fontSize="12" fontFamily="Liberation Sans" textAnchor="middle" fill="#222">A</text></Ico>
          </ToolBtn>
          <ToolBtn $w={36}>
            <Ico><path d="M2 2l12 12" stroke="#1c70c8" strokeWidth="2" /></Ico>
            <SplitArrow />
          </ToolBtn>
          <ToolBtn $w={36} style={{ marginLeft: -3 }}>
            <Ico><rect x="1" y="1" width="14" height="8" fill="#3c9fe0" /><rect x="1" y="9" width="10" height="6" fill="#f2cf3a" /><rect x="8" y="4" width="7" height="7" fill="#7cc24a" /></Ico>
            <SplitArrow />
          </ToolBtn>
        </ToolGroup>
        <ToolGroup $gap={5}>
          <ToolBtn $dim>
            <Ico><rect x="1" y="1" width="6" height="6" fill="#7fb33c" /><rect x="9" y="1" width="6" height="6" fill="#eef3f8" stroke="#555" /><path d="M4 9l3 6H1z" fill="#2a7fd0" /><path d="M12 9l3 3-3 3-3-3z" fill="#2a7fd0" /></Ico>
          </ToolBtn>
          <ToolBtn $dim>
            <Ico><circle cx="6" cy="8" r="3" fill="#f2c8a0" /><path d="M1 15c0-3 2-4 5-4s5 1 5 4z" fill="#e07a3a" /><rect x="9" y="1" width="6" height="5" fill="#fff" stroke="#888" /></Ico>
          </ToolBtn>
          <ToolBtn $dim><InfoIcon /></ToolBtn>
        </ToolGroup>
        <ZoomBox>
          <Ico $s={14}><circle cx="7" cy="6.500" r="5" fill="none" stroke="#2a6fb8" strokeWidth="1.600" /><path d="M4.500 6.500h5" stroke="#2a6fb8" strokeWidth="1.400" /><path d="M10 10l4 5" stroke="#2a6fb8" strokeWidth="2" /></Ico>
          <SliderTrack><SliderThumb /></SliderTrack>
          <Ico $s={14}><circle cx="7" cy="6.500" r="5" fill="none" stroke="#2a6fb8" strokeWidth="1.600" /><path d="M4.500 6.500h5M7 4v5" stroke="#2a6fb8" strokeWidth="1.400" /><path d="M10 10l4 5" stroke="#2a6fb8" strokeWidth="2" /></Ico>
        </ZoomBox>
        <ActionRow>
          <ActionBtn $w={67}>
            <svg width="17" height="17" viewBox="0 0 17 17"><circle cx="8.500" cy="8.500" r="8" fill="#2f74c8" stroke="#fff" /><text x="8.500" y="13" textAnchor="middle" fontSize="12" fontWeight="bold" fill="#fff" fontFamily="Liberation Sans">?</text></svg>
            Ajuda
          </ActionBtn>
          <ActionBtn $w={83}>
            <svg width="20" height="20" viewBox="0 0 20 20"><rect x="7" y="1" width="11" height="15" fill="#fff" stroke="#999" /><circle cx="12" cy="7" r="3" fill="#8ab4dc" /><path d="M1 14h7v-3l4 4.500-4 4.500v-3H1z" fill="#2a58c0" /></svg>
            Exportar
          </ActionBtn>
          <ActionBtn $w={107}>
            <svg width="24" height="18" viewBox="0 0 26 18"><circle cx="6" cy="6" r="3.500" fill="#f2d090" /><circle cx="20" cy="6" r="3.500" fill="#c84a3a" /><circle cx="13" cy="8" r="3.500" fill="#e04838" /><path d="M0 16c1-6 10-6 12-1v3H2zM14 15c2-5 11-5 12 1l-2 2H14z" fill="#e08a3a" /><path d="M8 18c0-6 10-6 10 0z" fill="#c8503a" /></svg>
            Compartilhar
          </ActionBtn>
          <ActionBtn $w={78}>
            <svg width="25" height="18" viewBox="0 0 30 20"><path d="M1 1h17l3 3v15H1z" fill="#f4f4f0" stroke="#444" /><rect x="1" y="1" width="17" height="6" fill="#777" /><path d="M28 6L18 17l-3 2 1-4L26 4z" fill="#e8c83a" stroke="#7a6a1a" strokeWidth="0.700" /></svg>
            Salvar
          </ActionBtn>
        </ActionRow>
        <CloseApp>×</CloseApp>
      </AppBar>

      <Canvas>
        <DiagramSvg width="1239" height="627" viewBox="0 194 1239 627">
          <defs>
            <filter id="soft" x="-20%" y="-20%" width="150%" height="150%">
              <feDropShadow dx="3" dy="3" stdDeviation="2.500" floodColor="#000" floodOpacity="0.400" />
            </filter>
          </defs>
          <g stroke="#111" strokeWidth="1.200" fill="none" filter="url(#soft)">
            <circle cx="247" cy="376" r="10" fill="#fff" />
            <path d="M247 386v20M232 396h30M247 406l-15 20M247 406l15 20" />
            <path d="M199 420L99 585M246.500 456v80M278 431l105 163" />
          </g>
          <g fill="#000" filter="url(#soft)">
            <path d="M96 591l4-15 10 9z" />
            <path d="M240 532h14l-7 14z" />
            <path d="M386 599l-14-7 13-9z" />
          </g>
          <g stroke="#111" strokeWidth="1.200" fill="#fff" filter="url(#soft)">
            <ellipse cx="246.500" cy="586.500" rx="75" ry="40" />
            <ellipse cx="81" cy="653" rx="75" ry="40" />
            <ellipse cx="415" cy="653.500" rx="75" ry="40" />
            <circle cx="88" cy="811" r="10" />
            <ellipse cx="395" cy="861" rx="75" ry="40" />
          </g>
          <g stroke="#111" strokeWidth="1.200" fill="none">
            <rect x="516.500" y="304.500" width="388" height="700" rx="50" />
            <rect x="526" y="314.500" width="369" height="680" rx="42" />
            <circle cx="645" cy="379" r="9" />
            <circle cx="645" cy="379" r="5.500" />
            <rect x="675.500" y="372" width="70" height="14.500" rx="7" />
          </g>
        </DiagramSvg>

        <DiagramLabel $x={246.500} $y={122} $size={22} $ls={0.900}>Diagrama UML</DiagramLabel>
        <DiagramLabel $x={705} $y={61} $size={26} $ls={0.400}>Aplicação para iPhone</DiagramLabel>
        <DiagramLabel $x={245} $y={247} $bold>Editor</DiagramLabel>
        <DiagramLabel $x={246} $y={393} $bold>Criar Notícia</DiagramLabel>
        <DiagramLabel $x={80} $y={459} $bold>Editar Notícia</DiagramLabel>
        <DiagramLabel $x={414} $y={460} $bold>Enviar para Revisão</DiagramLabel>

        <PhoneScreen>
          <StatusStrip>
            <SignalWrap>
              <svg width="44" height="16" viewBox="0 0 44 16">
                <path d="M0 11h4v3H0zM5 9h4v5H5zM10 7h4v7h-4zM15 4h4v10h-4zM20 1h3v13h-3z" fill="#fff" />
                <path d="M28 6c4-4 10-4 14 0M31 9c2.500-2 5.500-2 8 0" stroke="#fff" strokeWidth="2" fill="none" />
                <path d="M33.500 12l1.500-1.500 1.500 1.500-1.500 1.500z" fill="#fff" />
              </svg>
            </SignalWrap>
            <svg width="12" height="14" viewBox="0 0 12 14">
              <path d="M3 7V4.500a3 3 0 0 1 6 0V7" stroke="#fff" strokeWidth="1.500" fill="none" />
              <rect x="1" y="6.500" width="10" height="7" fill="#fff" />
            </svg>
          </StatusStrip>
          <SafariBar>
            <SafariTitle>Title</SafariTitle>
            <SafariUrl>
              <SafariUrlText>http://cardapiobandejao.sc.usp.br</SafariUrlText>
              <svg width="16" height="16" viewBox="0 0 16 16">
                <path d="M13 8a5.500 5.500 0 1 1-2-4.300" stroke="#9aa8b8" strokeWidth="2.400" fill="none" />
                <path d="M12.500 0v6h-6z" fill="#9aa8b8" />
              </svg>
            </SafariUrl>
          </SafariBar>
          <SegTabs>
            <SegTab $bg="#3b80dc" $w={52}>
              Segunda
              <SegPointer />
            </SegTab>
            <SegTab $bg="#1c1c1c" $w={54}>Terça</SegTab>
            <SegTab $bg="#1c1c1c" $w={53}>Quarta</SegTab>
            <SegTab $bg="#4a4a4a" $w={53}>Quinta</SegTab>
          </SegTabs>
          <MenuTable>
            <MenuHeader $h={18}>Almoço</MenuHeader>
            {lunch.map(([item, h]) => (
              <MenuRow key={item} $h={h}>{item}</MenuRow>
            ))}
            <MenuHeader $h={18}>Jantar</MenuHeader>
            {dinner.map(([item, h]) => (
              <MenuRow key={item} $h={h}>{item}</MenuRow>
            ))}
          </MenuTable>
        </PhoneScreen>

        <Inspector>
          <PanelHead>
            Inspetor
            <HeadBtn>×</HeadBtn>
          </PanelHead>
          <InspTabs>
            <InspTab $on>A</InspTab>
            <InspTab>
              <Ico $s={18}><ellipse cx="8" cy="8" rx="7.500" ry="5" fill="#e8a32a" stroke="#b87a10" transform="rotate(-35 8 8)" /><circle cx="6" cy="9" r="1" fill="#a85a10" /><circle cx="9" cy="6" r="1" fill="#a85a10" /></Ico>
            </InspTab>
            <InspTab>
              <Ico><path d="M2 2l12 12" stroke="#2a7fd0" strokeWidth="1.800" /></Ico>
            </InspTab>
            <InspTab>
              <Ico><rect x="6" y="6" width="9" height="8" fill="#fff" stroke="#aaa" /><rect x="1" y="2" width="10" height="8" fill="#8fbf2a" stroke="#6a9010" /></Ico>
            </InspTab>
          </InspTabs>
          <SectionHead>
            Texto
            <CollapseBtn />
          </SectionHead>
          <FormBody>
            <FormRow $h={21}>
              <FieldLabel $w={31}>Fonte</FieldLabel>
              <FieldInput $w={170}>Sans-Serif</FieldInput>
              <FieldBtn><DownTri /></FieldBtn>
            </FormRow>
            <FormRow $h={26} $mt={2}>
              <FieldLabel $w={50}>Tamanho</FieldLabel>
              <FieldInput $w={61} $grey>8</FieldInput>
              <FieldBtn><DownTri /></FieldBtn>
              <FieldBtn $w={21} $ml={3}><SansGlyph $size={14}>A</SansGlyph><SansGlyph $size={6}>▴</SansGlyph></FieldBtn>
              <FieldBtn $w={21} $ml={4}><SansGlyph $size={12}>A</SansGlyph><SansGlyph $size={6}>▾</SansGlyph></FieldBtn>
              <FieldLabel $w={22} $ml={11}>Cor</FieldLabel>
              <FieldBtn $w={21}><SansGlyph $size={14}>A</SansGlyph></FieldBtn>
            </FormRow>
            <FormRow $h={26} $mt={4} $ml={-3}>
              <FieldBtn $w={22} $ml={0}><b>B</b></FieldBtn>
              <FieldBtn $w={22} $ml={4}><i>I</i></FieldBtn>
              <FieldBtn $w={22} $ml={4}><u>U</u></FieldBtn>
              <AlignGroup $ml={10}>
                <AlignCell $on><AlignLines w={11} top={1} /></AlignCell>
                <AlignCell><AlignLines w={7} top={1} /></AlignCell>
                <AlignCell><AlignLines w={9} top={1} /></AlignCell>
              </AlignGroup>
              <AlignGroup $ml={11}>
                <AlignCell $on><AlignLines w={11} top={1} /></AlignCell>
                <AlignCell><AlignLines w={9} top={4} /></AlignCell>
                <AlignCell><AlignLines w={9} top={4} /></AlignCell>
              </AlignGroup>
            </FormRow>
          </FormBody>
        </Inspector>

        <Stencil>
          <StencilHead>
            Estampa
            <HeadBtns>
              <HeadBtn><FaCog size={9} /></HeadBtn>
              <HeadBtn>×</HeadBtn>
            </HeadBtns>
          </StencilHead>
          <StencilTab>Basic</StencilTab>
          <StencilBody>
            <ShapeGrid>
              <ShapeBox $r="0" />
              <ShapeBox $r="4px" />
              <ShapeBox $r="15px" />
              <ShapeBox $r="50%" />
              <div />
              <ShapeBox $r="25px" />
            </ShapeGrid>
            <StencilScroll>
              <ScrollCap $up />
              <ScrollThumb />
              <ScrollRest />
              <ScrollCap />
            </StencilScroll>
          </StencilBody>
          {Array.from({ length: 16 }, (_, i) => (
            <StencilRow key={i} />
          ))}
        </Stencil>

        <TaskWindow>
          <TaskTitle>
            <svg width="16" height="15" viewBox="0 0 18 16">
              <rect x="2" y="1" width="14" height="9" fill="#e8e8e8" stroke="#222" />
              <rect x="4" y="3" width="10" height="5" fill="#2a4a3a" />
              <rect x="1" y="11" width="16" height="4" fill="#ddd" stroke="#222" />
            </svg>
            <TaskTitleText>Gerenciador de tarefas do Windows</TaskTitleText>
            <TaskCaption>
              <svg width="10" height="10"><rect x="1" y="7" width="7" height="2" fill="#fff" /></svg>
            </TaskCaption>
            <TaskCaption>
              <svg width="12" height="12"><rect x="1" y="1" width="10" height="10" fill="none" stroke="#fff" strokeWidth="1.200" /><rect x="1" y="1" width="10" height="2" fill="#fff" /></svg>
            </TaskCaption>
            <TaskCaption $close>
              <svg width="12" height="12"><path d="M1.500 1.500l9 9M10.500 1.500l-9 9" stroke="#fff" strokeWidth="2" /></svg>
            </TaskCaption>
          </TaskTitle>
          <TaskMenu>
            <span>Arquivo</span>
            <span>Opções</span>
            <span>Exibir</span>
            <span>Desligar</span>
            <span>Ajuda</span>
          </TaskMenu>
          <TaskTabs>
            <TaskTab $w={60}>Aplicativos</TaskTab>
            <TaskTab $w={62} $on>Processos</TaskTab>
            <TaskTab $w={70}>Desempenho</TaskTab>
            <TaskTab $w={39} $ml={2}>Rede</TaskTab>
            <TaskTab $w={49} $ml={2}>Usuários</TaskTab>
          </TaskTabs>
          <TaskPanel>
            <ProcList>
              <ProcHead>
                <ProcHeadCell>Nome da imagem</ProcHeadCell>
                <ProcHeadCell>Nome de usuário</ProcHeadCell>
                <ProcHeadCell>Identific...</ProcHeadCell>
                <ProcHeadCell $center>CPU</ProcHeadCell>
                <ProcHeadCell>Uso de ...</ProcHeadCell>
                <ProcHeadCell />
              </ProcHead>
              <ProcessRows />
              <ProcScroll>
                <XpScrollBtn $up>
                  <svg width="9" height="7"><path d="M1 5l3.500-3.500L8 5" stroke="#fff" strokeWidth="2" fill="none" /></svg>
                </XpScrollBtn>
                <XpThumb>
                  <svg width="7" height="7"><path d="M0 1h7M0 3.500h7M0 6h7" stroke="#e6ecd8" /></svg>
                </XpThumb>
                <XpScrollBtn>
                  <svg width="9" height="7"><path d="M1 2l3.500 3.500L8 2" stroke="#fff" strokeWidth="2" fill="none" /></svg>
                </XpScrollBtn>
              </ProcScroll>
            </ProcList>
            <ProcFooter>
              <CheckLabel>
                <CheckBox>
                  <svg width="9" height="9"><path d="M1 4.500l2.500 2.500L8 1.500" stroke="#3a9a28" strokeWidth="2" fill="none" /></svg>
                </CheckBox>
                <span><u>M</u>ostrar processos de todos os usuários</span>
              </CheckLabel>
              <EndButton><span><u>F</u>inalizar processo</span></EndButton>
            </ProcFooter>
          </TaskPanel>
          <TaskStatus>
            <StatusCell $w={94} $pl={1}>Processos: 65</StatusCell>
            <StatusCell $w={120} $pl={5}>Uso de CPU: 0%</StatusCell>
            <StatusText>Confirmar carga: 1101M / 5464</StatusText>
            <Grip />
          </TaskStatus>
        </TaskWindow>
      </Canvas>
    </Page>
  );
}
